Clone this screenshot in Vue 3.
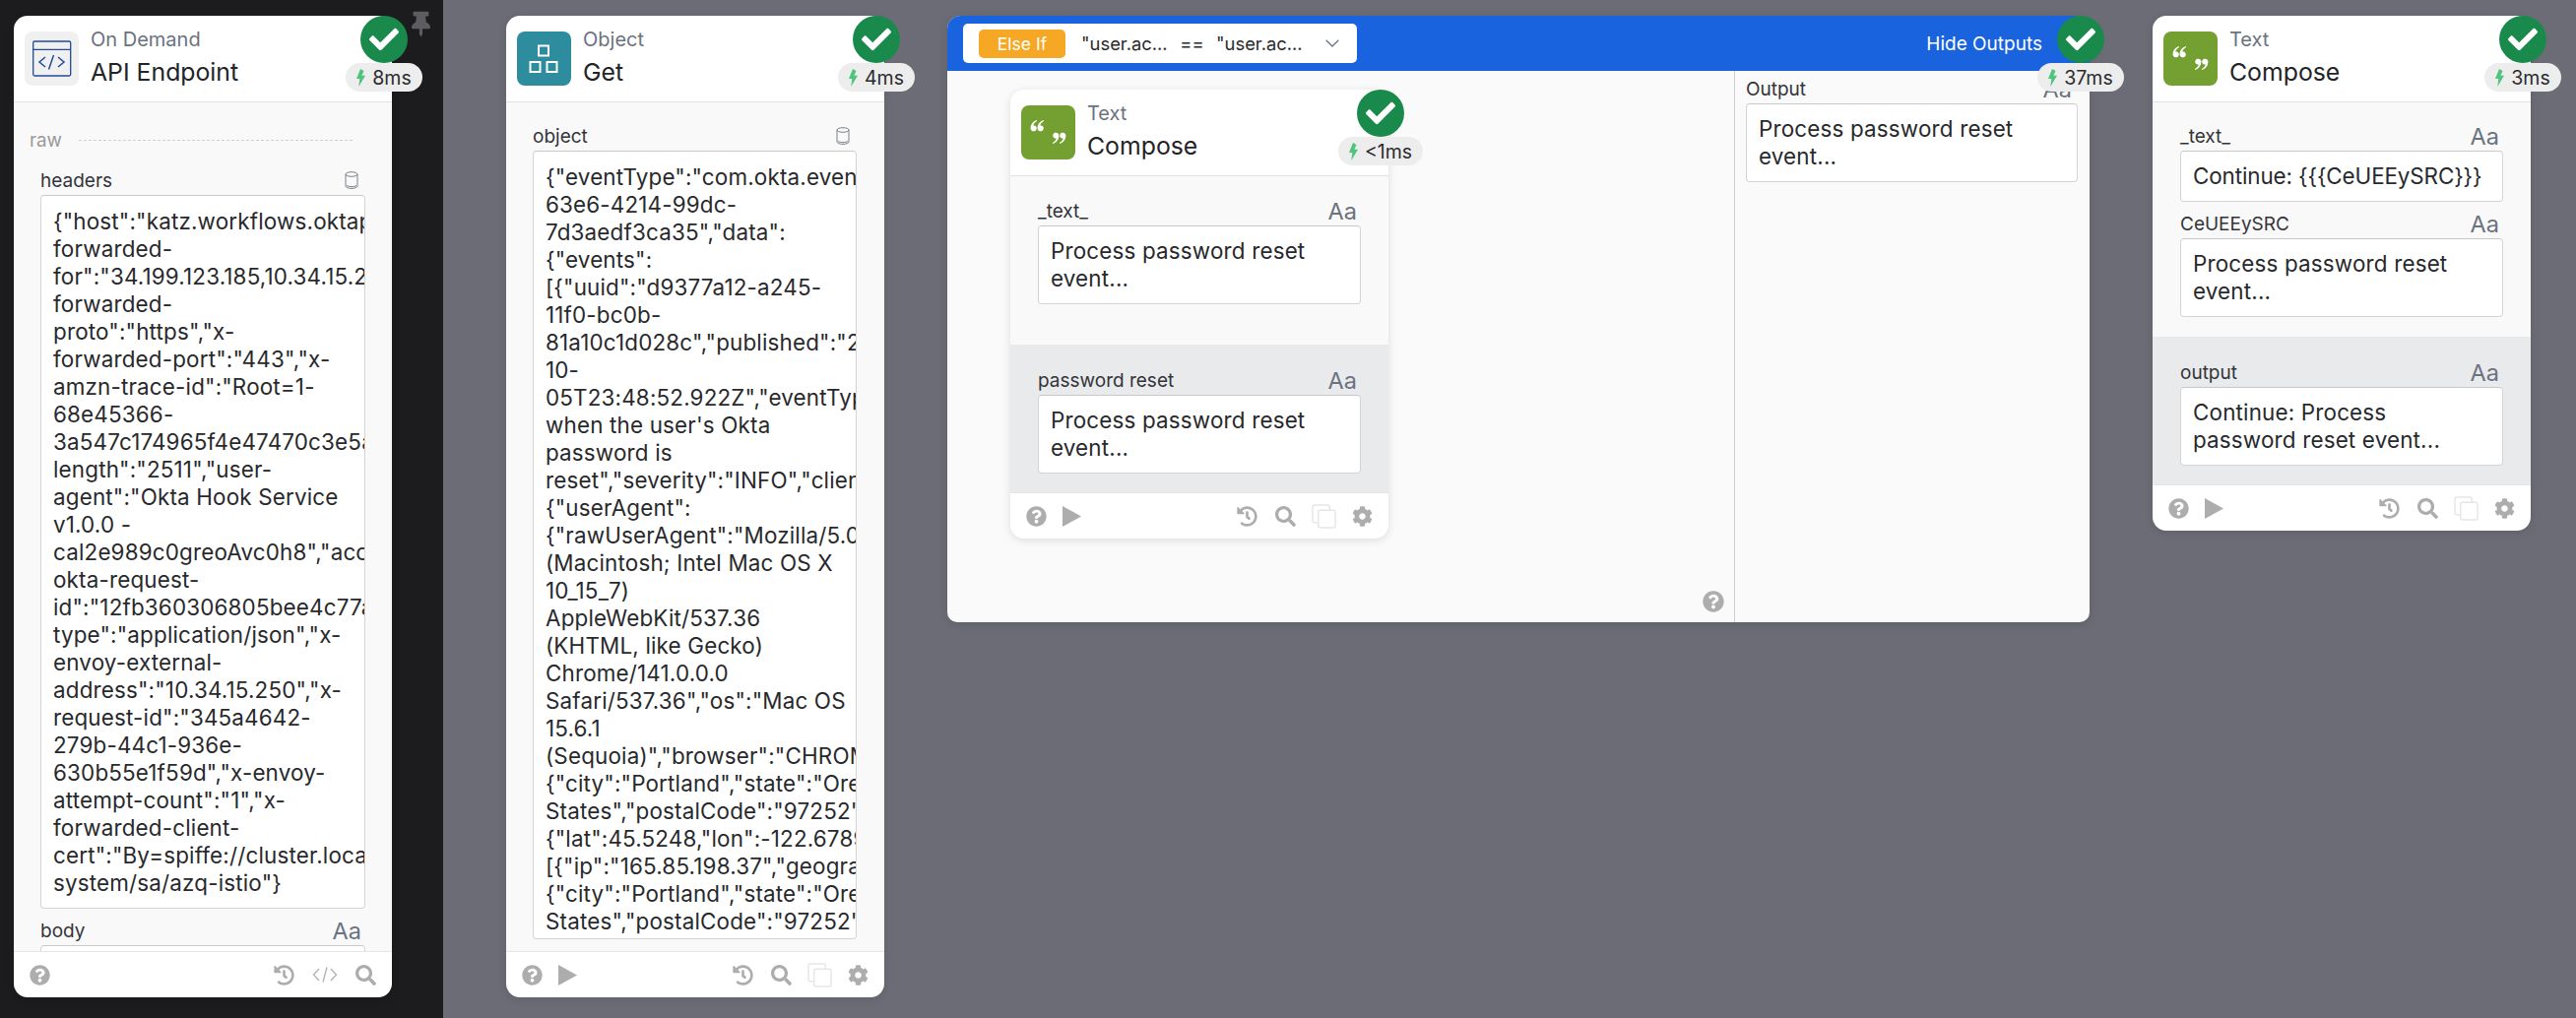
<script setup>
const icons = {
  help: { vb: '0 0 512 512', d: 'M504 256c0 136.997-111.043 248-248 248S8 392.997 8 256C8 119.083 119.043 8 256 8s248 111.083 248 248zM262.655 90c-54.497 0-89.255 22.957-116.549 63.758-3.536 5.286-2.353 12.415 2.715 16.258l34.699 26.31c5.205 3.947 12.621 3.008 16.665-2.122 17.864-22.658 30.113-35.797 57.303-35.797 20.429 0 45.698 13.148 45.698 32.958 0 14.976-12.363 22.667-32.534 33.976C247.128 238.528 216 254.941 216 296v4c0 6.627 5.373 12 12 12h56c6.627 0 12-5.373 12-12v-1.333c0-28.462 83.186-29.647 83.186-106.667 0-58.002-60.165-102-116.531-102zM256 338c-25.365 0-46 20.635-46 46 0 25.364 20.635 46 46 46s46-20.636 46-46c0-25.365-20.635-46-46-46z' },
  play: { vb: '0 0 20 22', d: 'M0 0 L20 11 L0 22Z' },
  history: { vb: '0 0 512 512', d: 'M504 255.531c.253 136.64-111.18 248.372-247.82 248.468-59.015.042-113.223-20.53-155.822-54.911-11.077-8.94-11.905-25.541-1.839-35.607l11.267-11.267c8.609-8.609 22.353-9.551 31.891-1.984C173.062 425.135 212.781 440 256 440c101.705 0 184-82.311 184-184 0-101.705-82.311-184-184-184-48.814 0-93.149 18.969-126.068 49.932l50.754 50.754c10.08 10.08 2.941 27.314-11.313 27.314H24c-8.837 0-16-7.163-16-16V38.627c0-14.254 17.234-21.393 27.314-11.314l49.372 49.372C129.209 34.136 189.552 8 256 8c136.81 0 247.747 110.78 248 247.531zm-180.912 78.784l9.823-12.63c8.138-10.463 6.253-25.542-4.21-33.679L288 256.349V152c0-13.255-10.745-24-24-24h-16c-13.255 0-24 10.745-24 24v135.651l65.409 50.874c10.463 8.137 25.541 6.253 33.679-4.21z' },
  search: { vb: '0 0 512 512', d: 'M505 442.7L405.3 343c-4.5-4.5-10.6-7-17-7H372c27.6-35.3 44-79.7 44-128C416 93.1 322.9 0 208 0S0 93.1 0 208s93.1 208 208 208c48.3 0 92.7-16.4 128-44v16.3c0 6.4 2.5 12.5 7 17l99.7 99.7c9.4 9.4 24.6 9.4 33.9 0l28.3-28.3c9.4-9.4 9.4-24.6.1-34zM208 336c-70.7 0-128-57.2-128-128 0-70.7 57.2-128 128-128 70.7 0 128 57.2 128 128 0 70.7-57.2 128-128 128z' },
  gear: { vb: '0 0 512 512', d: 'M487.4 315.7l-42.6-24.6c4.3-23.2 4.3-47 0-70.2l42.6-24.6c4.9-2.8 7.1-8.6 5.5-14-11.1-35.6-30-67.8-54.7-94.6-3.8-4.1-10-5.1-14.8-2.3L380.8 110c-17.9-15.4-38.5-27.3-60.8-35.1V25.8c0-5.6-3.9-10.5-9.4-11.7-36.7-8.2-74.3-7.8-109.2 0-5.5 1.2-9.4 6.1-9.4 11.7V75c-22.2 7.9-42.8 19.8-60.8 35.1L88.7 85.5c-4.9-2.8-11-1.9-14.8 2.3-24.7 26.7-43.6 58.9-54.7 94.6-1.7 5.4.6 11.2 5.5 14L67.3 221c-4.3 23.2-4.3 47 0 70.2l-42.6 24.6c-4.9 2.8-7.1 8.6-5.5 14 11.1 35.6 30 67.8 54.7 94.6 3.8 4.1 10 5.1 14.8 2.3l42.6-24.6c17.9 15.4 38.5 27.3 60.8 35.1v49.2c0 5.6 3.9 10.5 9.4 11.7 36.7 8.2 74.3 7.8 109.2 0 5.5-1.2 9.4-6.1 9.4-11.7v-49.2c22.2-7.9 42.8-19.8 60.8-35.1l42.6 24.6c4.9 2.8 11 1.9 14.8-2.3 24.7-26.7 43.6-58.9 54.7-94.6 1.5-5.5-.7-11.3-5.6-14.1zM256 336c-44.1 0-80-35.9-80-80s35.9-80 80-80 80 35.9 80 80-35.9 80-80 80z' }
}
const checkPath = 'M173.898 439.404l-166.4-166.4c-9.997-9.997-9.997-26.206 0-36.204l36.203-36.204c9.997-9.998 26.207-9.998 36.204 0L192 312.69 432.095 72.596c9.997-9.997 26.207-9.997 36.204 0l36.203 36.204c9.997 9.997 9.997 26.206 0 36.204l-294.4 294.401c-9.998 9.997-26.207 9.997-36.204-.001z'
const pinPath = 'M298.028 214.267L285.793 96H328c13.255 0 24-10.745 24-24V24c0-13.255-10.745-24-24-24H56C42.745 0 32 10.745 32 24v48c0 13.255 10.745 24 24 24h42.207L85.972 214.267C37.465 236.82 0 277.261 0 328c0 13.255 10.745 24 24 24h136v104.007c0 1.242.289 2.467.845 3.578l24 48c2.941 5.882 11.364 5.893 14.311 0l24-48a8.008 8.008 0 0 0 .845-3.578V352h136c13.255 0 24-10.745 24-24-.001-51.183-37.983-91.42-85.973-113.733z'
const quotePath = 'M16 15C12 16 9.6 19.500 9.600 23.200a3.100 3.100 0 1 0 5.600-1.800c-.7-.9-1.900-1.200-2.900-.9C12.600 18.800 14 17.200 16 16ZM23 15C19 16 16.600 19.500 16.600 23.200a3.100 3.100 0 1 0 5.600-1.800c-.7-.9-1.900-1.200-2.900-.9C19.600 18.800 21 17.200 23 16Z'

const headerLines = [
  '{"host":"katz.workflows.oktapreview","x-',
  'forwarded-',
  'for":"34.199.123.185,10.34.15.250","x-',
  'forwarded-',
  'proto":"https","x-',
  'forwarded-port":"443","x-',
  'amzn-trace-id":"Root=1-',
  '68e45366-',
  '3a547c174965f4e47470c3e5a2b1","content-',
  'length":"2511","user-',
  'agent":"Okta Hook Service',
  'v1.0.0 -',
  'cal2e989c0greoAvc0h8","accept":"*/*","x-',
  'okta-request-',
  'id":"12fb360306805bee4c77a1","content-',
  'type":"application/json","x-',
  'envoy-external-',
  'address":"10.34.15.250","x-',
  'request-id":"345a4642-',
  '279b-44c1-936e-',
  '630b55e1f59d","x-envoy-',
  'attempt-count":"1","x-',
  'forwarded-client-',
  'cert":"By=spiffe://cluster.local/ns/istio-',
  'system/sa/azq-istio"}'
]
const objectLines = [
  '{"eventType":"com.okta.event_hook","eventId":"',
  '63e6-4214-99dc-',
  '7d3aedf3ca35","data":',
  '{"events":',
  '[{"uuid":"d9377a12-a245-',
  '11f0-bc0b-',
  '81a10c1d028c","published":"2025-',
  '10-',
  '05T23:48:52.922Z","eventType":"user.',
  'when the user\'s Okta',
  'password is',
  'reset","severity":"INFO","client":',
  '{"userAgent":',
  '{"rawUserAgent":"Mozilla/5.0',
  '(Macintosh; Intel Mac OS X',
  '10_15_7)',
  'AppleWebKit/537.36',
  '(KHTML, like Gecko)',
  'Chrome/141.0.0.0',
  'Safari/537.36","os":"Mac OS',
  '15.6.1',
  '(Sequoia)","browser":"CHROME","zone":',
  '{"city":"Portland","state":"Oregon","country":"United',
  'States","postalCode":"97252","geo":',
  '{"lat":45.5248,"lon":-122.6789}}',
  '[{"ip":"165.85.198.37","geographical":',
  '{"city":"Portland","state":"Oregon","country":"United',
  'States","postalCode":"97252","geo":'
]
const pw = ['Process password reset', 'event...']
const fullTools = ['history', 'search', 'copy', 'gear']
</script>

<template>
  <div class="canvas">
    <aside class="rail"></aside>
    <svg class="pin" viewBox="0 0 384 512"><path :d="pinPath" /></svg>

    <!-- API Endpoint -->
    <section class="card card-api">
      <header class="head">
        <div class="tile tile-api">
          <svg viewBox="0 0 55 55" class="tile-svg" fill="none" stroke="#1f4a9e" stroke-width="1.3">
            <rect x="8.7" y="10" width="38" height="35" rx="1.5" />
            <path d="M8.7 18.3h38" />
            <path d="M21 26l-6 5 6 5M34 26l6 5-6 5M29.5 24l-5 14.5" stroke-width="1.5" />
          </svg>
        </div>
        <div class="titles"><span class="sub">On Demand</span><span class="title">API Endpoint</span></div>
      </header>
      <div class="body body-clip">
        <div class="raw"><span>raw</span><i></i></div>
        <div class="param-wrap">
          <div class="label"><span>headers</span>
            <svg class="cyl" viewBox="0 0 14 18" fill="none" stroke="#7a7f88" stroke-width="1"><ellipse cx="7" cy="3" rx="6" ry="2.3" /><path d="M1 3v12c0 1.3 2.7 2.4 6 2.4s6-1.100 6-2.400V3M2 14.500c1 .8 3 1.100 5 1.100s4-.3 5-1.100" /></svg>
          </div>
          <div class="input input-headers"><div v-for="l in headerLines" :key="l + 'h'" class="ln">{{ l }}</div></div>
          <div class="label label-next"><span>body</span><span class="aa">Aa</span></div>
          <div class="input input-stub"></div>
        </div>
      </div>
      <footer class="foot">
        <svg class="fi" :viewBox="icons.help.vb"><path :d="icons.help.d" /></svg>
        <span class="grow"></span>
        <svg class="fi" :viewBox="icons.history.vb"><path :d="icons.history.d" /></svg>
        <svg class="fi fi-code" viewBox="0 0 26 18" stroke="#b4b4b4" stroke-width="1.400"><path d="M7 3L1.500 9 7 15M19 3l5.500 6L19 15M15 1.500L11 16.500" /></svg>
        <svg class="fi" :viewBox="icons.search.vb"><path :d="icons.search.d" /></svg>
      </footer>
      <div class="status">
        <span class="ok"><svg viewBox="0 0 512 512"><path :d="checkPath" /></svg></span>
        <span class="time"><svg viewBox="0 0 9 18"><path d="M4 0L0 10h3.300L2.300 18 9 6.800H5.400L7.500 2z" /></svg>8ms</span>
      </div>
    </section>

    <!-- Object Get -->
    <section class="card card-get">
      <header class="head">
        <div class="tile tile-obj">
          <svg viewBox="0 0 55 55" class="tile-svg" fill="none" stroke="#fff" stroke-width="2">
            <rect x="22" y="14.500" width="10" height="10" /><rect x="13.500" y="31" width="10" height="10" /><rect x="30.500" y="31" width="10" height="10" />
          </svg>
        </div>
        <div class="titles"><span class="sub">Object</span><span class="title">Get</span></div>
      </header>
      <div class="body body-clip">
        <div class="param-get">
          <div class="label"><span>object</span>
            <svg class="cyl" viewBox="0 0 14 18" fill="none" stroke="#7a7f88" stroke-width="1"><ellipse cx="7" cy="3" rx="6" ry="2.3" /><path d="M1 3v12c0 1.3 2.7 2.4 6 2.4s6-1.100 6-2.400V3M2 14.500c1 .8 3 1.100 5 1.100s4-.3 5-1.100" /></svg>
          </div>
          <div class="input input-object"><div v-for="(l, i) in objectLines" :key="i" class="ln">{{ l }}</div></div>
        </div>
      </div>
      <footer class="foot">
        <svg class="fi" :viewBox="icons.help.vb"><path :d="icons.help.d" /></svg>
        <svg class="fi fi-play" :viewBox="icons.play.vb"><path :d="icons.play.d" /></svg>
        <span class="grow"></span>
        <template v-for="t in fullTools" :key="t">
          <svg v-if="t === 'copy'" class="fi fi-copy" viewBox="0 0 26 26"><path d="M6 19.500H3a2 2 0 0 1-2-2V3a2 2 0 0 1 2-2h14a2 2 0 0 1 2 2v3" /><rect x="7" y="6.500" width="18" height="18.500" rx="2" /></svg>
          <svg v-else class="fi" :viewBox="icons[t].vb"><path :d="icons[t].d" /></svg>
        </template>
      </footer>
      <div class="status">
        <span class="ok"><svg viewBox="0 0 512 512"><path :d="checkPath" /></svg></span>
        <span class="time"><svg viewBox="0 0 9 18"><path d="M4 0L0 10h3.300L2.300 18 9 6.800H5.400L7.500 2z" /></svg>4ms</span>
      </div>
    </section>

    <!-- Else If group -->
    <section class="group">
      <header class="group-head">
        <div class="cond">
          <span class="else">Else If</span>
          <span class="expr">"user.ac...</span><span class="eq">==</span><span class="expr">"user.ac...</span>
          <svg class="chev" viewBox="0 0 14 8" fill="none" stroke="#6b7280" stroke-width="1.300"><path d="M.7.700L7 7l6.300-6.300" /></svg>
        </div>
        <span class="hide">Hide Outputs</span>
      </header>
      <div class="group-body">
        <div class="stage">
          <section class="card card-inner">
            <header class="head">
              <div class="tile tile-text">
                <svg viewBox="0 0 55 55" class="tile-svg" fill="#fff"><path :d="quotePath" /><path :d="quotePath" transform="rotate(180 27.500 27)" /></svg>
              </div>
              <div class="titles"><span class="sub">Text</span><span class="title">Compose</span></div>
            </header>
            <div class="body">
              <div class="param-tall">
                <div class="label"><span>_text_</span><span class="aa">Aa</span></div>
                <div class="input"><div v-for="l in pw" :key="l" class="ln">{{ l }}</div></div>
              </div>
              <div class="param-out">
                <div class="label"><span>password reset</span><span class="aa">Aa</span></div>
                <div class="input"><div v-for="l in pw" :key="l" class="ln">{{ l }}</div></div>
              </div>
            </div>
            <footer class="foot">
              <svg class="fi" :viewBox="icons.help.vb"><path :d="icons.help.d" /></svg>
              <svg class="fi fi-play" :viewBox="icons.play.vb"><path :d="icons.play.d" /></svg>
              <span class="grow"></span>
              <template v-for="t in fullTools" :key="t">
                <svg v-if="t === 'copy'" class="fi fi-copy" viewBox="0 0 26 26"><path d="M6 19.500H3a2 2 0 0 1-2-2V3a2 2 0 0 1 2-2h14a2 2 0 0 1 2 2v3" /><rect x="7" y="6.500" width="18" height="18.500" rx="2" /></svg>
                <svg v-else class="fi" :viewBox="icons[t].vb"><path :d="icons[t].d" /></svg>
              </template>
            </footer>
            <div class="status">
              <span class="ok"><svg viewBox="0 0 512 512"><path :d="checkPath" /></svg></span>
              <span class="time"><svg viewBox="0 0 9 18"><path d="M4 0L0 10h3.300L2.300 18 9 6.800H5.400L7.500 2z" /></svg>&lt;1ms</span>
            </div>
          </section>
          <svg class="fi stage-help" :viewBox="icons.help.vb"><path :d="icons.help.d" /></svg>
        </div>
        <div class="outputs">
          <div class="label"><span>Output</span><span class="aa">Aa</span></div>
          <div class="input"><div v-for="l in pw" :key="l" class="ln">{{ l }}</div></div>
        </div>
      </div>
      <div class="status status-group">
        <span class="ok"><svg viewBox="0 0 512 512"><path :d="checkPath" /></svg></span>
        <span class="time"><svg viewBox="0 0 9 18"><path d="M4 0L0 10h3.300L2.300 18 9 6.800H5.400L7.500 2z" /></svg>37ms</span>
      </div>
    </section>

    <!-- Final Compose -->
    <section class="card card-final">
      <header class="head">
        <div class="tile tile-text">
          <svg viewBox="0 0 55 55" class="tile-svg" fill="#fff"><path :d="quotePath" /><path :d="quotePath" transform="rotate(180 27.500 27)" /></svg>
        </div>
        <div class="titles"><span class="sub">Text</span><span class="title">Compose</span></div>
      </header>
      <div class="body">
        <div class="param-inputs">
          <div class="label"><span>_text_</span><span class="aa">Aa</span></div>
          <div class="input"><div class="ln ln-tight">Continue: {{ '{' + '{' + '{' }}CeUEEySRC{{ '}' + '}' + '}' }}</div></div>
          <div class="label label-next"><span>CeUEEySRC</span><span class="aa">Aa</span></div>
          <div class="input"><div v-for="l in pw" :key="l" class="ln">{{ l }}</div></div>
        </div>
        <div class="param-out">
          <div class="label"><span>output</span><span class="aa">Aa</span></div>
          <div class="input"><div class="ln">Continue: Process</div><div class="ln">password reset event...</div></div>
        </div>
      </div>
      <footer class="foot">
        <svg class="fi" :viewBox="icons.help.vb"><path :d="icons.help.d" /></svg>
        <svg class="fi fi-play" :viewBox="icons.play.vb"><path :d="icons.play.d" /></svg>
        <span class="grow"></span>
        <template v-for="t in fullTools" :key="t">
          <svg v-if="t === 'copy'" class="fi fi-copy" viewBox="0 0 26 26"><path d="M6 19.500H3a2 2 0 0 1-2-2V3a2 2 0 0 1 2-2h14a2 2 0 0 1 2 2v3" /><rect x="7" y="6.500" width="18" height="18.500" rx="2" /></svg>
          <svg v-else class="fi" :viewBox="icons[t].vb"><path :d="icons[t].d" /></svg>
        </template>
      </footer>
      <div class="status">
        <span class="ok"><svg viewBox="0 0 512 512"><path :d="checkPath" /></svg></span>
        <span class="time"><svg viewBox="0 0 9 18"><path d="M4 0L0 10h3.300L2.300 18 9 6.800H5.400L7.500 2z" /></svg>3ms</span>
      </div>
    </section>
  </div>
</template>

<style scoped>
.canvas {
  position: relative;
  width: 2616px;
  height: 1034px;
  overflow: hidden;
  background: #6c6c76;
  font-family: Inter, "Liberation Sans", sans-serif;
  color: #2a2b2e;
}
.rail { position: absolute; left: 0; top: 0; bottom: 0; width: 450px; background: #1c1c1f; }
.pin { position: absolute; left: 418px; top: 11px; width: 19px; height: 27px; fill: #5d5d61; }

.card {
  position: absolute;
  width: 384px;
  display: flex;
  flex-direction: column;
  background: #fff;
  border-radius: 14px;
  box-shadow: 0 2px 8px rgba(0, 0, 0, .12);
}
.card-api { left: 14px; top: 16px; height: 997px; }
.card-get { left: 514px; top: 16px; height: 997px; }
.card-final { left: 2186px; top: 16px; }
.card-inner { position: relative; }

.head { display: flex; gap: 12px; height: 88px; flex: none; padding: 16px 11px 0; box-sizing: border-box; border-bottom: 1px solid #e2e2e2; }
.tile { width: 55px; height: 55px; border-radius: 8px; flex: none; }
.tile-svg { display: block; width: 55px; height: 55px; }
.tile-api { background: #f0f0f0; }
.tile-obj { background: #2d8c9e; }
.tile-text { background: #74a032; }
.titles { display: flex; flex-direction: column; margin-top: -4px; }
.sub { font-size: 20px; line-height: 24px; color: #6b7280; }
.title { font-size: 24.8px; line-height: 32px; margin-top: 5px; color: #232427; }

.body { background: #f9f9f9; flex: none; }
.body-clip { flex: 1; min-height: 0; overflow: hidden; }

.raw { display: flex; align-items: center; gap: 17px; padding: 26px 40px 0 16px; height: 24px; font-size: 18.8px; color: #9a9a9a; }
.raw i { flex: 1; border-top: 1px dashed #d0d0d0; }
.param-wrap { padding: 17px 27px 0; }
.param-get { padding: 22px 28px 0 27px; }
.param-tall { padding: 23px 28px 41px; }
.param-inputs { padding: 22px 28px 20px; }
.param-out { background: #e9eaec; padding: 24px 28px 19px; }

.label {
  display: flex;
  justify-content: space-between;
  align-items: center;
  height: 24px;
  margin-bottom: 3px;
  font-size: 19px;
  color: #33343a;
  padding-right: 4px;
}
.label-next { margin-top: 10px; }
.aa { font-size: 23.5px; color: #6b7280; }
.cyl { width: 14px; height: 18px; margin-right: 3px; }

.input {
  box-sizing: border-box;
  padding: 11px 12px;
  background: #fff;
  border: 1px solid #d4d4d4;
  border-top-color: #c8c8c8;
  border-radius: 4px;
  font-size: 22.4px;
  letter-spacing: .18px;
  line-height: 28px;
  color: #28292c;
  overflow: hidden;
}
.ln { white-space: nowrap; }
.ln-tight { letter-spacing: -.1px; }
.input-headers { height: 725px; width: 330px; padding-top: 11.5px; }
.input-object { height: 801px; width: 329px; padding-top: 12px; }
.input-stub { height: 40px; }

.foot {
  display: flex;
  align-items: center;
  gap: 18px;
  flex: none;
  height: 47px;
  padding: 0 16px 0 16px;
  box-sizing: border-box;
  border-top: 1px solid #e6e6e6;
  border-radius: 0 0 14px 14px;
}
.fi { width: 21px; height: 21px; fill: #adadad; flex: none; }
.fi-code { width: 26px; height: 18px; fill: none; }
.fi-copy { width: 25px; height: 25px; fill: none; stroke: #e6e6e6; stroke-width: 1.5; margin: 0 -2px; }
.fi-play { width: 19px; height: 21px; margin-left: -2px; }
.grow { flex: 1; }

.status { position: absolute; right: -32px; top: 0; width: 80px; display: flex; flex-direction: column; align-items: center; }
.ok { width: 48px; height: 48px; border-radius: 50%; background: #1a8a4c; display: flex; align-items: center; justify-content: center; }
.ok svg { width: 30px; height: 30px; fill: #fff; }
.time {
  display: flex;
  align-items: center;
  gap: 7px;
  height: 29px;
  padding: 0 11px;
  border-radius: 15px;
  background: #ededed;
  font-size: 19.5px;
  color: #2a2b2e;
  white-space: nowrap;
}
.time svg { width: 9px; height: 18px; fill: #4fc47c; }

.group {
  position: absolute;
  left: 962px;
  top: 16px;
  width: 1160px;
  height: 616px;
  display: flex;
  flex-direction: column;
  background: #fafafa;
  border-radius: 14px 14px 10px 10px;
  box-shadow: 0 2px 8px rgba(0, 0, 0, .12);
}
.group-head {
  height: 56px;
  flex: none;
  display: flex;
  align-items: center;
  justify-content: space-between;
  padding: 0 48px 0 16px;
  background: #1a63de;
  border-radius: 14px 14px 0 0;
}
.cond {
  width: 400px;
  height: 40px;
  box-sizing: border-box;
  display: flex;
  align-items: center;
  padding: 0 18px 0 16px;
  background: #fff;
  border-radius: 5px;
  font-size: 18.4px;
}
.else { width: 88px; height: 29px; display: flex; align-items: center; justify-content: center; background: #f6a723; color: #fff; border-radius: 5px; margin-right: 16px; font-size: 17.5px; }
.expr { width: 88px; white-space: nowrap; }
.eq { width: 49px; text-align: center; }
.chev { width: 14px; height: 8px; margin-left: auto; }
.hide { color: #fff; font-size: 19px; }
.group-body { flex: 1; min-height: 0; display: flex; }
.stage { position: relative; width: 800px; flex: none; box-sizing: border-box; padding: 19px 0 0 64px; border-right: 1px solid #cfcfcf; }
.stage-help { position: absolute; right: 10px; bottom: 10px; width: 22px; height: 22px; }
.outputs { flex: 1; padding: 6px 12px 0 11px; }
.outputs .label { margin-bottom: 3px; padding-right: 6px; }
.status-group { right: -31px; }
</style>
